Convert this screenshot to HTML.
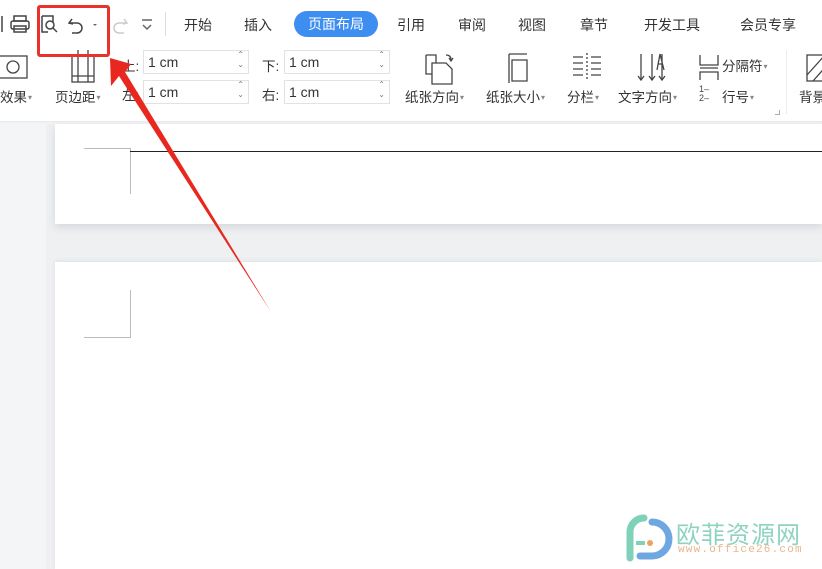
<!DOCTYPE html>
<html><head><meta charset="utf-8"><style>
*{margin:0;padding:0;box-sizing:border-box}
body{width:822px;height:569px;overflow:hidden;position:relative;background:#f3f5f7;font-family:"Liberation Sans","Noto Sans CJK SC",sans-serif;color:#333}
.a{position:absolute;white-space:nowrap}
.t{font-size:14px;color:#333}
.s{font-size:13.5px;color:#333}
.inp{position:absolute;width:106px;height:24px;border:1px solid #e2e2e2;background:#fff;font-size:14px;padding:3px 0 0 4px;color:#333}
.inp:after{content:"⌃\A⌄";white-space:pre;position:absolute;right:4px;top:-1px;font-size:8px;line-height:10px;color:#777}
.dd{font-size:8px;color:#888;vertical-align:2px;margin-left:1px}
</style></head><body>
<div class="a" style="left:0;top:0;width:822px;height:122px;background:#fff"></div>
<div class="a" style="left:0;top:121px;width:822px;height:3px;background:linear-gradient(#e9ebee,#f3f5f7)"></div>
<svg class="a" style="left:0;top:10px" width="160" height="30" fill="none" stroke="#444" stroke-width="1.5">
<line x1="2" y1="6" x2="2" y2="22"/>
<rect x="14" y="6" width="12" height="5"/><rect x="11" y="11" width="18" height="8" rx="2"/><rect x="14" y="16" width="12" height="6"/>
<path d="M42 6h11v6M42 6v16h6"/><circle cx="50" cy="15" r="4"/><line x1="53" y1="18" x2="57" y2="22"/>
<path d="M72 9l-3 4 4 1M69 13h8a5 5 0 0 1 0 10h-5"/><path d="M93 14l2 2 2-2z" fill="#666" stroke="none"/>
<path d="M124 9l3 4-4 1M127 13h-8a5 5 0 0 0 0 10h5" stroke="#ccc"/>
<path d="M142 10h10M143 15l4 4 4-4" stroke="#666"/>
</svg>
<div class="a" style="left:165px;top:12px;width:1px;height:24px;background:#ddd"></div>
<div class="a t" style="left:184px;top:15px">开始</div>
<div class="a t" style="left:244px;top:15px">插入</div>
<div class="a" style="left:294px;top:11px;width:84px;height:26px;border-radius:13px;background:#3d8ef0;color:#fff;font-size:14px;text-align:center;line-height:26px">页面布局</div>
<div class="a t" style="left:397px;top:15px">引用</div>
<div class="a t" style="left:458px;top:15px">审阅</div>
<div class="a t" style="left:518px;top:15px">视图</div>
<div class="a t" style="left:580px;top:15px">章节</div>
<div class="a t" style="left:644px;top:15px">开发工具</div>
<div class="a t" style="left:740px;top:15px">会员专享</div>
<svg class="a" style="left:0;top:50px" width="822" height="40" fill="none" stroke="#444" stroke-width="1.3">
<rect x="-2" y="6" width="29" height="22"/><circle cx="13" cy="17" r="6"/>
<rect x="72" y="5" width="22" height="27"/><line x1="78" y1="0" x2="78" y2="32"/><line x1="88" y1="0" x2="88" y2="32"/><line x1="72" y1="26" x2="94" y2="26"/>
<path d="M426 5h10v8M426 5v19h6M432 13h14l6 6v15h-20z"/><path d="M446 5q5 0 5 5m-2-2l2 3 2-3"/>
<path d="M509 4h18M509 4v29M512 10h15v21h-15z"/>
<path d="M573 7h10M573 13h10M573 19h10M573 25h10M591 7h10M591 13h10M591 19h10M591 25h10"/><line x1="587" y1="3" x2="587" y2="30" stroke-dasharray="2 2"/>
<path d="M641 4v26m-3-4l3 4 3-4M652 4v26m-3-4l3 4 3-4M657 20l3-16 4 16M658 14h5M662 4v26m-3-4l3 4 3-4" />
<path d="M700 5v10h18V5M700 18h18M700 30V22h18v8" />
<rect x="807" y="5" width="22" height="26"/><path d="M807 25l18-20M813 31l16-18"/>
</svg>
<div class="a" style="left:786px;top:50px;width:1px;height:64px;background:#eee"></div>
<div class="a s" style="left:0;top:86px">效果<span class="dd">▾</span></div>
<div class="a s" style="left:55px;top:86px">页边距<span class="dd">▾</span></div>
<div class="a s" style="left:122px;top:55px">上:</div>
<div class="a s" style="left:122px;top:84px">左:</div>
<div class="inp" style="left:143px;top:50px">1 cm</div>
<div class="inp" style="left:143px;top:80px">1 cm</div>
<div class="a s" style="left:262px;top:55px">下:</div>
<div class="a s" style="left:262px;top:84px">右:</div>
<div class="inp" style="left:284px;top:50px">1 cm</div>
<div class="inp" style="left:284px;top:80px">1 cm</div>
<div class="a s" style="left:405px;top:86px">纸张方向<span class="dd">▾</span></div>
<div class="a s" style="left:486px;top:86px">纸张大小<span class="dd">▾</span></div>
<div class="a s" style="left:567px;top:86px">分栏<span class="dd">▾</span></div>
<div class="a s" style="left:618px;top:86px">文字方向<span class="dd">▾</span></div>
<div class="a s" style="left:722px;top:55px">分隔符<span class="dd">▾</span></div>
<div class="a" style="left:699px;top:85px;font-size:9px;line-height:9px;color:#444">1–<br>2–</div>
<div class="a s" style="left:722px;top:86px">行号<span class="dd">▾</span></div>
<div class="a s" style="left:799px;top:86px">背景</div>
<div class="a" style="left:775px;top:110px;width:5px;height:5px;border-right:1px solid #aaa;border-bottom:1px solid #aaa"></div>
<div class="a" style="left:46px;top:124px;width:776px;height:445px;background:#eef0f2"></div>
<div class="a" style="left:55px;top:124px;width:767px;height:100px;background:#fff;box-shadow:0 3px 8px #d4d7db"></div>
<div class="a" style="left:55px;top:262px;width:767px;height:307px;background:#fff;box-shadow:0 -1px 4px #dde0e3"></div>
<div class="a" style="left:84px;top:148px;width:46px;height:1px;background:#bbb"></div>
<div class="a" style="left:130px;top:148px;width:1px;height:46px;background:#bbb"></div>
<div class="a" style="left:130px;top:151px;width:692px;height:1px;background:#222"></div>
<div class="a" style="left:130px;top:290px;width:1px;height:47px;background:#bbb"></div>
<div class="a" style="left:84px;top:337px;width:47px;height:1px;background:#bbb"></div>
<svg class="a" style="left:620px;top:510px" width="56" height="54"><path d="M10 48V22a14 14 0 0 1 14-14" stroke="#7fd1b9" stroke-width="7" fill="none" stroke-linecap="round"/><path d="M32 12a16 16 0 0 1 0 34H20" stroke="#6fa8e0" stroke-width="7" fill="none" stroke-linecap="round"/><circle cx="30" cy="33" r="3" fill="#f0a060"/><path d="M16 33h9" stroke="#7fd1b9" stroke-width="4"/></svg>
<div class="a" style="left:676px;top:515px;font-size:24px;color:#8ed3c0;letter-spacing:1px">欧菲资源网</div>
<div class="a" style="left:678px;top:544px;font-size:11px;color:#ebb58e;letter-spacing:1.2px;font-family:'Liberation Mono',monospace">www.office26.com</div>
<div class="a" style="left:37px;top:5px;width:73px;height:52px;border:3px solid #e8322b;border-radius:3px"></div>
<svg class="a" style="left:0;top:0" width="822" height="569"><polygon points="110,58 131,64 125,72 271,312 119,76 111,86" fill="#e8281f"/></svg>
</body></html>
